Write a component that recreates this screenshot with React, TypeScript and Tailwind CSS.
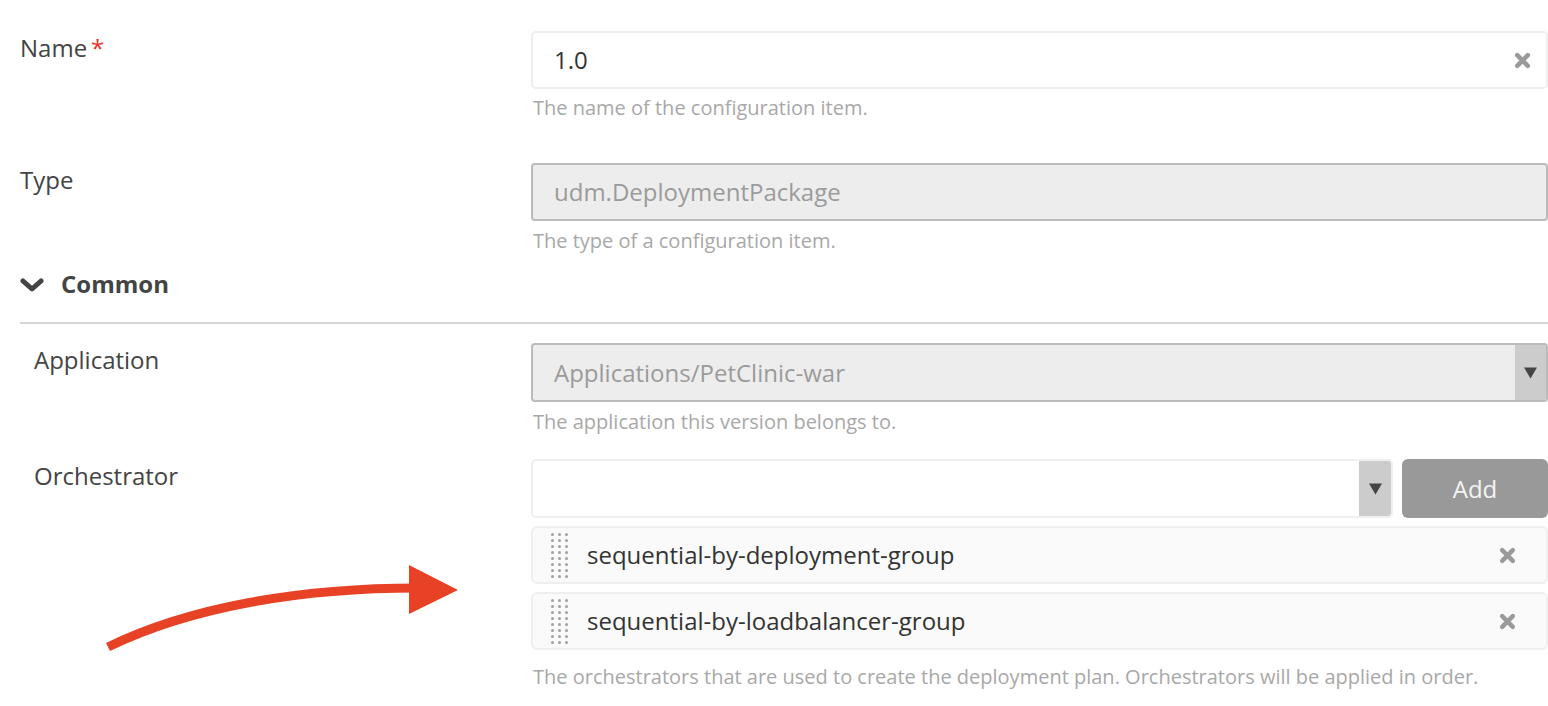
import React from "react";

const Cross = ({ className = "" }: { className?: string }) => (
    <svg viewBox="0 0 16 16" className={className} width="17" height="17">
        <path
            d="M3 3 L13 13 M13 3 L3 13"
            stroke="#9a9a9a"
            strokeWidth="4.2"
            strokeLinecap="round"
        />
    </svg>
);

const Caret = () => (
    <svg viewBox="0 0 12 10" width="13" height="12">
        <path d="M0 0 H12 L6 10 Z" fill="#444" />
    </svg>
);

const DragHandle = () => (
    <div className="grid grid-cols-3 gap-x-[4px] gap-y-[3px]">
        {Array.from({ length: 24 }).map((_, i) => (
            <span key={i} className="block w-[3px] h-[3px] rounded-full bg-[#a0a0a0]" />
        ))}
    </div>
);

function Help({ children, className = "" }: { children: React.ReactNode; className?: string }) {
    return (
        <p className={`text-[20px] leading-[22px] text-[#a8a8a8] pl-[2px] ${className}`}>
            {children}
        </p>
    );
}

function Label({ children, indent = false }: { children: React.ReactNode; indent?: boolean }) {
    return (
        <div
            className={`w-[511px] shrink-0 text-[24px] leading-[34px] text-[#444] ${
                indent ? "pl-[14px]" : ""
            }`}
        >
            {children}
        </div>
    );
}

function OrchestratorItem({ name }: { name: string }) {
    return (
        <div className="flex items-center h-[58px] rounded-[6px] border-2 border-[#efefef] bg-[#fafafa] pl-[18px] pr-[30px]">
            <DragHandle />
            <span className="ml-[19px] flex-1 text-[24px] text-[#333]">{name}</span>
            <Cross />
        </div>
    );
}

export default function App() {
    return (
        <div className="relative w-full h-[706px] overflow-hidden bg-white font-['Open_Sans',sans-serif] pl-[20px] pt-[31px]">
            {/* Name */}
            <div className="flex">
                <Label>
                    Name<span className="ml-[4px] text-[#e8332a]">*</span>
                </Label>
                <div className="flex-1">
                    <div className="flex items-center h-[58px] rounded-[5px] border-2 border-[#efefef] bg-white pl-[21px] pr-[15px]">
                        <span className="flex-1 text-[24px] text-[#333]">1.0</span>
                        <Cross />
                    </div>
                    <Help className="mt-[8px]">The name of the configuration item.</Help>
                </div>
            </div>

            {/* Type */}
            <div className="flex mt-[44px]">
                <Label>Type</Label>
                <div className="flex-1">
                    <div className="flex items-center h-[58px] rounded-[4px] border-2 border-[#bbbbbb] bg-[#ededed] pl-[21px]">
                        <span className="text-[24px] text-[#9b9b9b]">udm.DeploymentPackage</span>
                    </div>
                    <Help className="mt-[9px]">The type of a configuration item.</Help>
                </div>
            </div>

            {/* Common section */}
            <div className="flex items-center mt-[17px] h-[30px]">
                <svg viewBox="0 0 24 16" width="24" height="16" className="mt-[2px]">
                    <path
                        d="M3 4 L12 12 L21 4"
                        fill="none"
                        stroke="#444"
                        strokeWidth="5"
                        strokeLinejoin="round"
                        strokeLinecap="round"
                    />
                </svg>
                <span className="ml-[17px] text-[24px] font-bold text-[#444]">Common</span>
            </div>
            <div className="mt-[23px] h-[2px] bg-[#d6d6d6]" />

            {/* Application */}
            <div className="flex mt-[19px]">
                <Label indent>Application</Label>
                <div className="flex-1">
                    <div className="flex items-stretch h-[59px] rounded-[4px] border-2 border-[#bbbbbb] bg-[#ededed] overflow-hidden">
                        <span className="flex-1 flex items-center pl-[21px] text-[24px] text-[#9b9b9b]">
                            Applications/PetClinic-war
                        </span>
                        <span className="w-[31px] flex items-center justify-center bg-[#cccccc]">
                            <Caret />
                        </span>
                    </div>
                    <Help className="mt-[9px]">The application this version belongs to.</Help>
                </div>
            </div>

            {/* Orchestrator */}
            <div className="flex mt-[26px]">
                <Label indent>Orchestrator</Label>
                <div className="flex-1">
                    <div className="flex gap-[9px]">
                        <div className="flex-1 flex items-stretch h-[59px] rounded-[5px] border-2 border-[#efefef] bg-white overflow-hidden">
                            <span className="flex-1" />
                            <span className="w-[32px] flex items-center justify-center bg-[#cccccc]">
                                <Caret />
                            </span>
                        </div>
                        <button className="w-[146px] h-[59px] rounded-[6px] bg-[#999999] text-[24px] text-[#f4f4f4]">
                            Add
                        </button>
                    </div>
                    <div className="mt-[8px] flex flex-col gap-[8px]">
                        <OrchestratorItem name="sequential-by-deployment-group" />
                        <OrchestratorItem name="sequential-by-loadbalancer-group" />
                    </div>
                    <Help className="mt-[16px]">
                        The orchestrators that are used to create the deployment plan. Orchestrators will be applied in order.
                    </Help>
                </div>
            </div>

            {/* Annotation arrow */}
            <svg
                className="absolute left-[100px] top-[555px]"
                width="370"
                height="100"
                viewBox="0 0 370 100"
            >
                <path
                    d="M8 92 C 90 52, 200 33, 318 33"
                    fill="none"
                    stroke="#e84226"
                    strokeWidth="9"
                />
                <path d="M309 10 L358 35 L309 59 Z" fill="#e84226" />
            </svg>
        </div>
    );
}
